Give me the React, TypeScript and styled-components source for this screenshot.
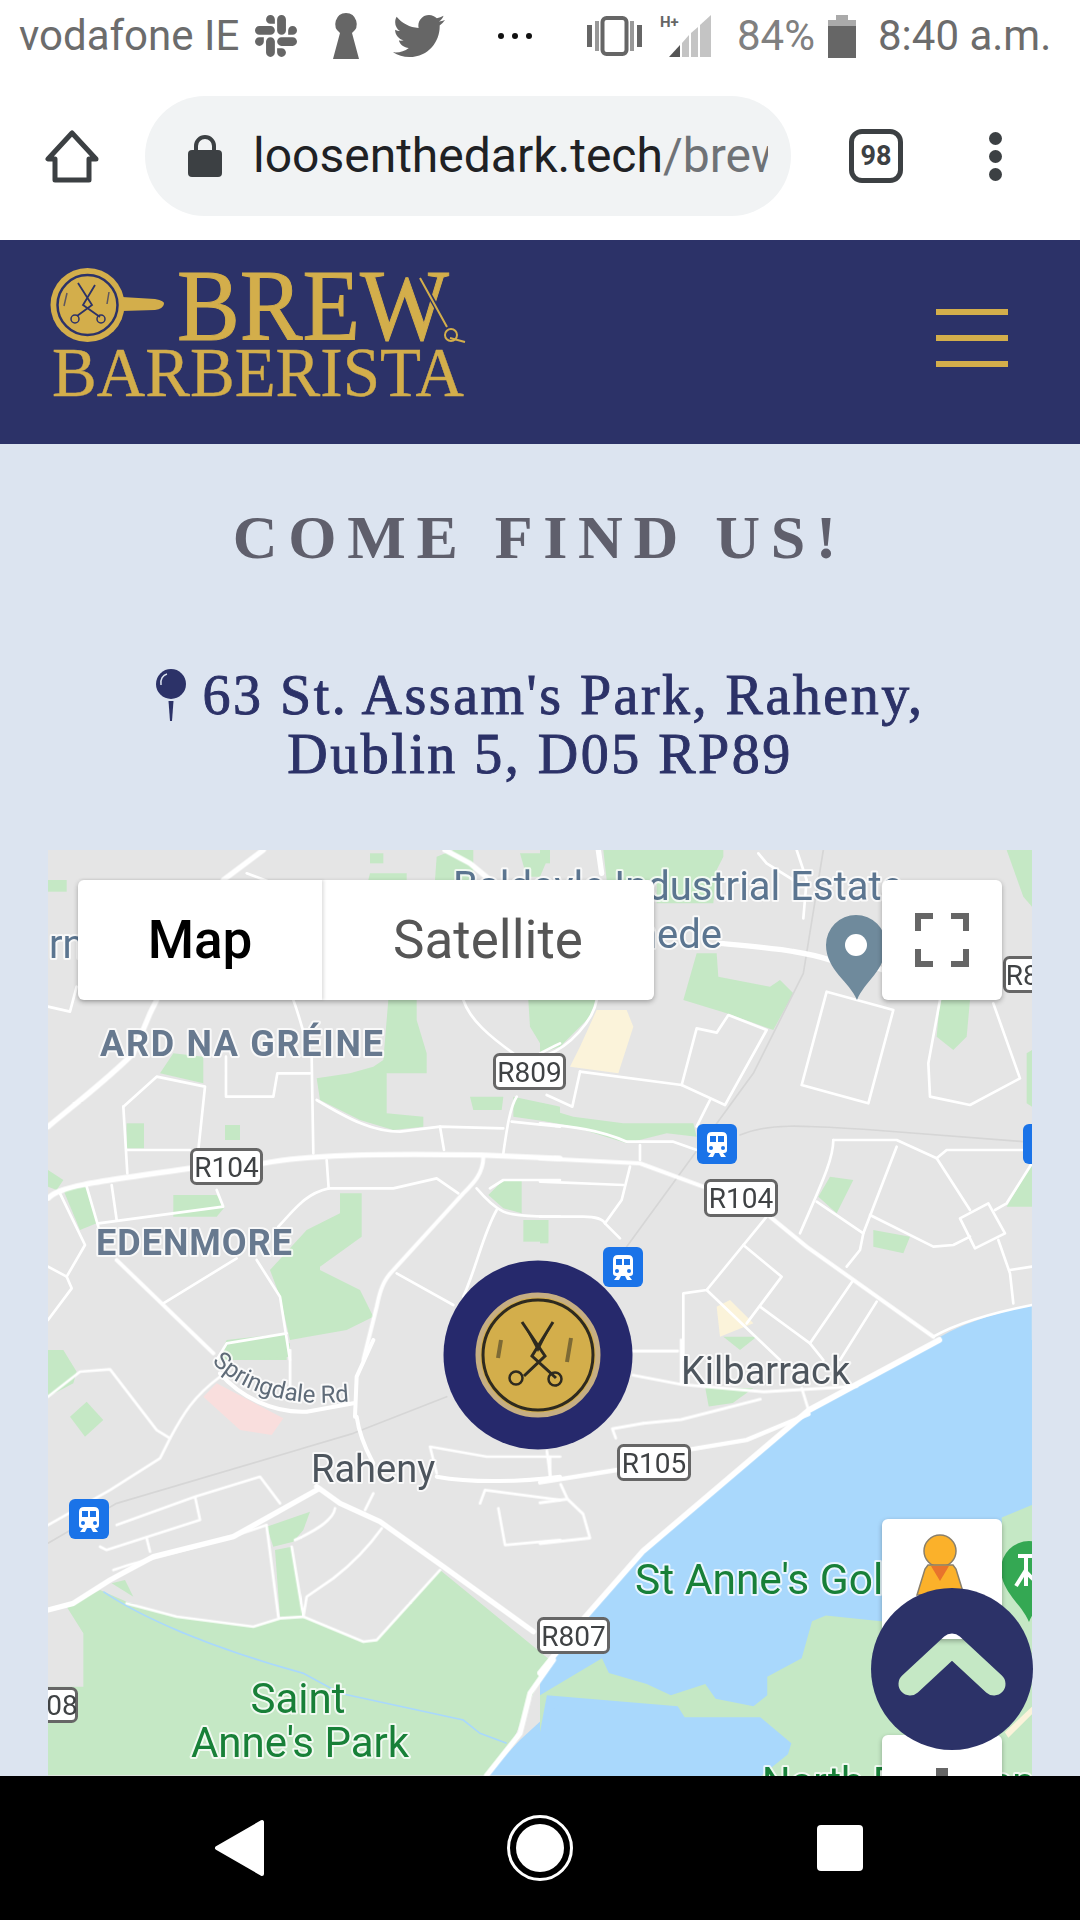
import React from "react";
import styled, { createGlobalStyle } from "styled-components";
import { FaSlack, FaTwitter } from "react-icons/fa";

const NAVY = "#2c3268";
const GOLD = "#d3ae4b";
const GREEN = "#c5e8c5";
const WATER = "#a9d8fc";

const Global = createGlobalStyle`
  html, body { margin: 0; padding: 0; background: #000; }
  * { box-sizing: border-box; }
`;

const Screen = styled.div`
  position: relative;
  width: 1080px;
  height: 1920px;
  overflow: hidden;
  display: flex;
  flex-direction: column;
  background: #fff;
  font-family: Roboto, "Liberation Sans", sans-serif;
`;

const StatusBar = styled.div`
  height: 72px;
  padding-left: 19px;
  display: flex;
  align-items: center;
  color: #6c6c6c;
`;

const StatusText = styled.span<{ $width: number; $left?: number; $color?: string }>`
  flex: none;
  width: ${(p) => p.$width}px;
  margin-left: ${(p) => p.$left ?? 0}px;
  font-size: 42px;
  line-height: 48px;
  white-space: nowrap;
  color: ${(p) => p.$color ?? "#6c6c6c"};
`;

const StatusIcon = styled.span<{ $left: number; $width: number; $height: number; $shift?: number }>`
  display: block;
  flex: none;
  margin-left: ${(p) => p.$left}px;
  width: ${(p) => p.$width}px;
  height: ${(p) => p.$height}px;
  transform: translateY(${(p) => p.$shift ?? 0}px);
  & > svg { display: block; width: 100%; height: 100%; }
`;

const Toolbar = styled.div`
  height: 168px;
  padding-left: 45px;
  display: flex;
  align-items: center;
`;

const HomeButton = styled.svg`
  width: 54px;
  height: 54px;
  flex: none;
`;

const AddressBar = styled.div`
  margin-left: 46px;
  width: 646px;
  height: 120px;
  flex: none;
  border-radius: 60px;
  background: #f1f3f4;
  display: flex;
  align-items: center;
  padding-left: 43px;
`;

const LockIcon = styled.svg`
  width: 34px;
  height: 42px;
  flex: none;
`;

const Url = styled.div`
  margin-left: 31px;
  width: 515px;
  overflow: hidden;
  white-space: nowrap;
  font-size: 48px;
  line-height: 56px;
  color: #202124;
  & > span { color: #6f7276; }
`;

const TabCount = styled.div`
  margin-left: 58px;
  width: 54px;
  height: 54px;
  flex: none;
  border: 5px solid #3c4043;
  border-radius: 13px;
  display: flex;
  align-items: center;
  justify-content: center;
  font-size: 27px;
  font-weight: 700;
  color: #3c4043;
`;

const MenuDots = styled.div`
  margin-left: 86px;
  display: flex;
  flex-direction: column;
  gap: 5px;
  & > i { display: block; width: 13px; height: 13px; border-radius: 50%; background: #3c4043; }
`;

const SiteHeader = styled.header`
  height: 204px;
  flex: none;
  background: ${NAVY};
  display: flex;
  align-items: center;
  justify-content: space-between;
  padding: 0 72px 0 48px;
`;

const LogoArt = styled.svg`
  width: 425px;
  height: 140px;
  flex: none;
  align-self: flex-start;
  margin-top: 22px;
`;

const Burger = styled.div`
  width: 72px;
  display: flex;
  flex-direction: column;
  gap: 20px;
  margin-bottom: 8px;
  & > i { display: block; height: 6px; background: ${GOLD}; }
`;

const Main = styled.main`
  height: 1332px;
  flex: none;
  background: #dce4f0;
  overflow: hidden;
  display: flex;
  flex-direction: column;
  align-items: center;
`;

const Title = styled.h1`
  margin: 58px 0 0;
  font-family: "Liberation Serif", serif;
  font-size: 62px;
  line-height: 70px;
  font-weight: 700;
  letter-spacing: 10.7px;
  color: #5f5f6c;
  white-space: nowrap;
`;

const Address = styled.h2`
  margin: 94px 0 0;
  font-family: "Liberation Serif", serif;
  font-size: 56px;
  line-height: 59px;
  font-weight: 400;
  letter-spacing: 2.5px;
  -webkit-text-stroke: 0.9px ${NAVY};
  color: ${NAVY};
  text-align: center;
`;

const PinGlyph = styled.svg`
  width: 32px;
  height: 52px;
  margin-right: 15px;
  vertical-align: -7px;
`;

const MapFrame = styled.div`
  position: relative;
  margin-top: 66px;
  width: 984px;
  height: 926px;
  flex: none;
  overflow: hidden;
  background: #e5e5e5;
`;

const MapArt = styled.svg`
  display: block;
  width: 984px;
  height: 926px;
`;

const SoftLayer = styled.g`
  filter: blur(0.7px);
`;

const MapText = styled.text<{ $size: number; $color: string; $weight?: number; $halo?: string; $track?: number }>`
  font-family: Roboto, sans-serif;
  font-size: ${(p) => p.$size}px;
  font-weight: ${(p) => p.$weight ?? 400};
  fill: ${(p) => p.$color};
  letter-spacing: ${(p) => p.$track ?? 0}px;
  paint-order: stroke;
  stroke: ${(p) => p.$halo ?? "rgba(255,255,255,.75)"};
  stroke-width: 4px;
  stroke-linejoin: round;
`;

const ShieldLabel = styled.text`
  font-family: Roboto, sans-serif;
  font-size: 28px;
  fill: #3f4244;
  text-anchor: middle;
`;

const MapTypeControl = styled.div`
  position: absolute;
  left: 30px;
  top: 30px;
  height: 120px;
  display: flex;
  border-radius: 6px;
  background: #fff;
  box-shadow: 0 2px 5px rgba(0, 0, 0, 0.3);
`;

const MapTypeButton = styled.div<{ $width: number; $active?: boolean }>`
  width: ${(p) => p.$width}px;
  display: flex;
  align-items: center;
  justify-content: center;
  font-size: 53px;
  font-weight: ${(p) => (p.$active ? 500 : 400)};
  color: ${(p) => (p.$active ? "#000" : "#565656")};
  box-shadow: ${(p) => (p.$active ? "2px 0 3px rgba(0,0,0,.12)" : "none")};
`;

const MapButton = styled.div<{ $top: number }>`
  position: absolute;
  left: 834px;
  top: ${(p) => p.$top}px;
  width: 120px;
  height: 120px;
  border-radius: 6px;
  background: #fff;
  box-shadow: 0 2px 5px rgba(0, 0, 0, 0.3);
  display: flex;
  align-items: center;
  justify-content: center;
`;

const ZoomStroke = styled.i`
  position: absolute;
  left: 54px;
  top: 33px;
  width: 12px;
  height: 40px;
  background: #666;
`;

const BottomNav = styled.nav`
  height: 144px;
  flex: none;
  background: #000;
  padding: 0 90px;
  display: grid;
  grid-template-columns: repeat(3, 300px);
  align-items: center;
  justify-items: center;
`;

const ScrollTop = styled.button`
  position: absolute;
  left: 871px;
  top: 1588px;
  width: 162px;
  height: 162px;
  padding: 0;
  border: 0;
  background: none;
  & > svg { display: block; }
`;

type Zone = {
  t: string;
  green: string[];
  yellow?: string[];
  pink?: string[];
  rail?: string[];
  thin: string[];
  mid?: string[];
  thick?: string[];
};

const ZONES: Zone[] = [
  {
    t: "translate(40 840) scale(.33333)",
    green: [
      "M24 120H80V155H24Z",
      "M1185 120L1190 50L1240 30H1300V120Z",
      "M985 120L990 100H1100V120Z",
      "M990 40H1030V70H990Z",
      "M1440 40H1530L1500 110H1460Z",
      "M1045 480H1130V540L1160 640V700H1040V820L1150 830V860L1060 870L960 840L840 780L830 715L930 700L1000 680L1030 660Z",
      "M1465 480H1560V620L1500 610L1470 560Z",
      "M360 700L400 640L490 650V730Z",
      "M260 850H312V925H260Z",
      "M555 855H600V900H555Z",
      "M400 1065H530L555 1100L530 1130H400Z",
      "M1290 770H1390L1385 810H1300Z",
      "M1420 770L1560 800V850L1420 830Z",
      "M1345 1065L1390 1020H1445V1120L1390 1105Z",
      "M1450 1140H1525V1205H1450Z",
      "M70 1050L140 1040L170 1150L120 1170Z",
      "M690 1290L800 1170L900 1120V1060H965V1190L840 1280V1290L960 1350L1000 1430L920 1470L750 1500L720 1370Z",
      "M560 1500L740 1480V1560H530Z",
      "M24 990L70 1020L50 1050L24 1040Z",
    ],
    thick: [
      "M24 860C120 780 200 720 280 640L330 520L350 480",
      "M550 120L670 30",
      "M1215 30L1290 70L1350 120",
      "M24 1075C60 1040 130 1030 450 985M670 970C800 945 1000 940 1320 945L1560 955",
    ],
    mid: [
      "M1330 950C1330 1000 1300 1030 1270 1060L1060 1290C1030 1320 1020 1350 1010 1400L970 1560",
      "M230 1260L520 1540",
    ],
    thin: [
      "M620 100L700 130",
      "M250 800L350 710L495 740L475 930",
      "M250 800L262 1000",
      "M262 930H450",
      "M558 650V770H700L712 700H810",
      "M815 650L820 940",
      "M760 480C775 520 785 560 795 590",
      "M830 780C930 840 1000 875 1080 875L1200 860L1390 865",
      "M1200 860L1212 930",
      "M1430 770C1410 800 1400 870 1390 940",
      "M1415 845L1560 860",
      "M860 960L866 1045",
      "M866 1045H1060L1190 1015L1255 1060",
      "M866 1045C800 1060 770 1100 715 1160",
      "M1310 1045C1340 1080 1370 1105 1390 1115C1420 1130 1500 1130 1560 1130",
      "M1350 1045L1390 1020H1560",
      "M1370 1110C1330 1180 1310 1280 1270 1370",
      "M1070 1300L1240 1395",
      "M140 1040L175 1160M215 1035L230 1140",
      "M60 1060L135 1215L80 1310L95 1345L24 1440",
      "M175 1150L550 1100L530 1050",
      "M370 1390L590 1255",
      "M650 1260L720 1370L750 1560",
      "M24 1280L80 1310",
      "M530 1560L560 1510L740 1480",
      "M24 500L90 515L110 440",
      "M1270 480C1290 540 1350 590 1420 640",
      "M1500 640L1560 610",
    ],
  },
  {
    t: "translate(540 840) scale(.33333)",
    green: [
      "M0 30H30V70H0Z",
      "M190 30H550V50L530 90L520 190H350V120H200Z",
      "M1400 30H1476V200L1450 170Z",
      "M430 480L470 340H530L535 410L690 440L720 420L760 460L700 570L560 520Z",
      "M0 480H170L150 530L60 620L0 640Z",
      "M1200 480H1290L1280 590L1240 630L1190 590Z",
      "M0 800L100 830L250 850H460L470 890L380 880L260 910L100 860L0 840Z",
      "M835 1070L870 1010L940 1020L890 1120Z",
      "M1000 1170L1110 1190L1090 1240L1000 1220Z",
      "M1400 1100L1476 970V1100Z",
      "M1460 640L1476 630V800L1460 790Z",
      "M550 1490H650L600 1530Z",
      "M0 1140H25V1210H0Z",
    ],
    yellow: ["M120 620L170 510H260L280 560L235 700L90 680Z", "M530 1400L570 1380L640 1450L540 1490Z"],
    rail: ["M850 30L790 400L640 700L260 1220", "M600 885C680 850 780 855 1000 870L1450 905"],
    thick: ["M175 30L185 100", "M540 310C650 320 780 330 870 360M1000 380L1030 390"],
    mid: ["M0 955C100 960 200 965 300 970L490 1040", "M690 1130L800 1220L1180 1490"],
    thin: [
      "M655 40L680 70L760 120",
      "M770 30L800 120L790 235",
      "M170 480C160 540 90 620 20 645",
      "M860 455L1060 510L985 790L785 735Z",
      "M1200 480L1165 670L1170 770L1290 795L1440 715L1360 490",
      "M470 565L530 578L565 525L680 570L555 795L425 735Z",
      "M120 695L425 735",
      "M120 695L97 800L20 765",
      "M510 780L470 860",
      "M0 850C100 860 180 870 260 905H400L470 930",
      "M300 915V960",
      "M270 980L245 1080L195 1150L240 1195",
      "M0 1025L250 1035",
      "M0 1130H130C170 1130 190 1140 195 1150",
      "M680 1130L500 1350L430 1360V1560",
      "M610 1215L725 1310L620 1450",
      "M500 1350L720 1560",
      "M660 1400L810 1510L850 1560",
      "M880 900H1070L1190 955L1290 1110",
      "M880 900C880 960 840 1040 780 1180",
      "M1070 920L970 1180L960 1230L920 1280",
      "M830 1085L970 1180",
      "M990 1125L1180 1220L1240 1215L1290 1190",
      "M1190 955L1220 930H1476",
      "M1260 1135L1345 1090L1395 1180L1305 1225Z",
      "M1375 1200L1410 1300L1420 1390",
      "M1410 1290L1476 1280",
      "M1365 1110L1400 1090L1476 970",
      "M940 1320L810 1510",
      "M1010 1385L900 1560",
      "M1476 1395C1350 1420 1250 1450 1180 1490",
    ],
  },
  {
    t: "translate(40 1340) scale(.33333)",
    green: [
      "M24 30H70L110 95L100 130L24 170Z",
      "M90 230L140 185L190 240L135 290Z",
      "M560 40L600 10H750V50L600 60Z",
      "M680 560L810 515L790 570L760 605L700 620Z",
      "M705 630L755 620L790 830H720Z",
      "M215 730L255 720L280 770Z",
      "M80 800L180 750L270 790L410 830L640 860L720 835L790 830L970 905L1010 900L1200 690L1530 960L1480 1060L1420 1200L1340 1306H24V1040H130V880Z",
    ],
    pink: ["M490 170L530 130L730 235L695 285L600 270Z"],
    rail: ["M24 610L230 490L940 280L1220 170"],
    thick: [
      "M24 810L100 790L210 720L340 650L580 590L830 450",
      "M830 440L900 490L1020 545L1210 680L1480 875",
      "M1540 960L1470 1060L1440 1180L1340 1306",
    ],
    mid: [
      "M950 230C960 300 990 350 1000 370",
      "M1000 0L950 110L945 230",
      "M540 100C600 170 700 220 800 215L940 190",
      "M1190 410C1300 430 1450 425 1560 410",
    ],
    thin: [
      "M24 170L120 95L210 88L350 270L390 295L360 355L210 450L24 555",
      "M390 295C430 220 460 170 540 110",
      "M180 620L200 630L480 540L465 470M230 555L465 470L660 410L720 490",
      "M320 595L330 635",
      "M220 690C300 660 500 620 680 555",
      "M260 790L410 830L640 860L720 835L790 830L970 905L1010 900L1200 690",
      "M680 560L715 830",
      "M755 620L790 830L800 770L880 715C950 660 1000 600 1025 565",
      "M765 600C830 570 880 540 885 505",
      "M1000 460L975 510",
      "M1190 400L1170 320L1340 350H1560",
      "M1530 350V405",
      "M1320 490L1335 450L1560 480",
      "M1375 505L1395 615L1560 600",
      "M750 30V150",
    ],
  },
  {
    t: "translate(540 1340) scale(.34435 .36996)",
    green: [
      "M480 130H620L560 170L490 180Z",
      "M0 960L180 860L200 900L310 930L380 960L480 930L510 970L620 990L660 960V910L760 860L790 760L830 745L990 760L1341 720V480L1430 445V1180H640L720 1120L730 1090L640 1020H420L400 990L20 960L0 1060Z",
    ],
    yellow: ["M1350 1060L1430 990V1010L1360 1075Z"],
    thick: ["M1160 0L780 190L300 570L130 750L0 900"],
    mid: ["M0 385L230 350M440 295L600 270L780 200"],
    thin: [
      "M270 95L410 120L650 140L920 125",
      "M270 30H400",
      "M410 0V120",
      "M760 130L780 190",
      "M300 225L210 240L220 265",
      "M300 225L410 215L640 160",
      "M20 300L30 370",
      "M60 390L80 430L0 440",
      "M80 430L125 470L145 535L0 550",
    ],
  },
];

const WATER_PATHS = [
  { t: "translate(540 1340) scale(.34435 .36996)", d: "M1160 0L780 190L300 570L130 750L0 900V1180H1430V0Z" },
  { t: "translate(540 840) scale(.33333)", d: "M1100 1560C1200 1470 1350 1420 1476 1395V1560Z" },
  { t: "translate(40 1340) scale(.33333)", d: "M1340 1306L1440 1200L1560 1090V1306Z" },
  { t: "translate(40 1340) scale(.33333)", d: "M1340 1170L1385 1145L1415 1190L1350 1190Z" },
];

const Zones = ({ pick }: { pick: (z: Zone) => React.ReactNode }) => (
  <>
    {ZONES.map((z) => (
      <g key={z.t} transform={z.t}>
        {pick(z)}
      </g>
    ))}
  </>
);

const Lines = ({ list, width, color = "#fff" }: { list?: string[]; width: number; color?: string }) => (
  <>
    {(list ?? []).map((d) => (
      <path key={d} d={d} fill="none" stroke={color} strokeWidth={width} strokeLinejoin="round" strokeLinecap="round" />
    ))}
  </>
);

const Fills = ({ list, color }: { list?: string[]; color: string }) => (
  <>
    {(list ?? []).map((d) => (
      <path key={d} d={d} fill={color} />
    ))}
  </>
);

const Shield = ({ x, y, w, h, label, anchor }: { x: number; y: number; w: number; h: number; label: string; anchor?: number }) => (
  <g>
    <rect x={x + 1.5} y={y + 1.5} width={w - 3} height={h - 3} rx={5} fill="#fff" stroke="#666" strokeWidth={3} />
    <ShieldLabel x={anchor ?? x + w / 2} y={y + h / 2 + 10}>
      {label}
    </ShieldLabel>
  </g>
);

const Transit = ({ x, y }: { x: number; y: number }) => (
  <g transform={`translate(${x} ${y})`}>
    <rect width={40} height={40} rx={6} fill="#1a73e8" />
    <path d="M15 8H25Q30 8 30 13V26Q30 29 27 29H13Q10 29 10 26V13Q10 8 15 8Z" fill="#fff" />
    <path d="M14 29L11 33H16L18 29ZM26 29L29 33H24L22 29Z" fill="#fff" />
    <rect x={13} y={12} width={6} height={6} fill="#1a73e8" />
    <rect x={21} y={12} width={6} height={6} fill="#1a73e8" />
    <circle cx={14} cy={24} r={2} fill="#1a73e8" />
    <circle cx={26} cy={24} r={2} fill="#1a73e8" />
  </g>
);

const MapPicture = () => (
  <MapArt viewBox="48 850 984 926">
    <defs>
      <path id="springdale" d="M212 1362C240 1392 290 1410 362 1400" />
    </defs>
    <rect x={48} y={850} width={984} height={926} fill="#e5e5e5" />
    <SoftLayer>
      {WATER_PATHS.map((w) => (
        <path key={w.d} transform={w.t} d={w.d} fill={WATER} />
      ))}
      <Zones pick={(z) => <Fills list={z.green} color={GREEN} />} />
      <Zones pick={(z) => <Fills list={z.yellow} color="#fbf3da" />} />
      <Zones pick={(z) => <Fills list={z.pink} color="#f9dedd" />} />
      <path
        transform="translate(40 1340) scale(.33333)"
        d="M190 755C300 830 500 920 790 1000L900 1060L1270 1140L1320 1180L1400 1210"
        fill="none"
        stroke={WATER}
        strokeWidth={5}
      />
      <Zones pick={(z) => <Lines list={z.rail} width={5} color="#d6d6d6" />} />
      <Zones pick={(z) => <Lines list={z.thin} width={8} />} />
      <Zones pick={(z) => <Lines list={z.mid} width={12} />} />
      <Zones pick={(z) => <Lines list={z.thick} width={16} />} />
    </SoftLayer>

    <MapText x={453} y={900} $size={40} $color="#5b7590">Baldoyle Industrial Estate</MapText>
    <MapText x={722} y={948} $size={40} $color="#5b7590" textAnchor="end">Donaghmede</MapText>
    <MapText x={49} y={958} $size={40} $color="#5b7590">rn</MapText>
    <MapText x={100} y={1056} $size={36} $weight={700} $track={1.7} $color="#67798f">ARD NA GRÉINE</MapText>
    <MapText x={96} y={1255} $size={36} $weight={700} $track={1} $color="#67798f">EDENMORE</MapText>
    <MapText x={681} y={1384} $size={38} $color="#4d555d">Kilbarrack</MapText>
    <MapText x={311} y={1482} $size={38} $color="#4d555d">Raheny</MapText>
    <MapText $size={24} $color="#5f6b78">
      <textPath href="#springdale">Springdale Rd</textPath>
    </MapText>
    <MapText x={298} y={1713} $size={42} $color="#188038" textAnchor="middle">Saint</MapText>
    <MapText x={300} y={1757} $size={42} $color="#188038" textAnchor="middle">Anne's Park</MapText>
    <MapText x={635} y={1594} $size={42.5} $color="#188038">St Anne's Golf Club</MapText>
    <MapText x={762} y={1796} $size={40} $color="#188038">North Bull Island</MapText>

    <Shield x={493} y={1053} w={73} h={37} label="R809" />
    <Shield x={190} y={1148} w={73} h={37} label="R104" />
    <Shield x={704} y={1179} w={74} h={38} label="R104" />
    <Shield x={617} y={1444} w={74} h={37} label="R105" />
    <Shield x={537} y={1617} w={73} h={37} label="R807" />
    <Shield x={30} y={1687} w={48} h={36} label="08" anchor={62} />
    <Shield x={1003} y={956} w={70} h={37} label="R807" />

    <Transit x={697} y={1124} />
    <Transit x={603} y={1247} />
    <Transit x={69} y={1499} />
    <Transit x={1023} y={1124} />

    <path d="M857 1000C850 982 826 970 826 945A30 30 0 0 1 886 945C886 970 864 982 857 1000Z" fill="#6f8a9c" />
    <circle cx={856} cy={945} r={11} fill="#fff" />

    <path d="M1029 1622C1022 1604 1001 1592 1001 1569A28 28 0 0 1 1057 1569C1057 1592 1036 1604 1029 1622Z" fill="#34a853" />
    <path d="M1018 1556H1034M1026 1556V1586M1026 1570L1016 1586M1026 1572L1036 1582" stroke="#fff" strokeWidth={4} fill="none" />

    <circle cx={538} cy={1355} r={94.5} fill="#26296c" />
    <circle cx={538} cy={1355} r={60} fill={GOLD} stroke="#c6ae82" strokeWidth={5} />
    <circle cx={538} cy={1355} r={55} fill={GOLD} stroke="#2e2a1f" strokeWidth={3} />
    <path d="M522 1322L545 1356L524 1376M553 1322L532 1356L556 1378" fill="none" stroke="#2e2a1f" strokeWidth={3} />
    <path d="M522 1322L538 1345L553 1322L538 1352Z" fill="#2e2a1f" />
    <circle cx={516} cy={1378} r={6.5} fill="none" stroke="#2e2a1f" strokeWidth={2.5} />
    <circle cx={555} cy={1379} r={6.5} fill="none" stroke="#2e2a1f" strokeWidth={2.5} />
    <path d="M501 1340L498 1358M571 1338L567 1362" fill="none" stroke="#7d6a35" strokeWidth={4} />
  </MapArt>
);

const Logo = () => (
  <LogoArt viewBox="48 262 425 140">
    <circle cx={87.5} cy={305} r={37} fill={GOLD} />
    <circle cx={87.5} cy={305} r={30} fill="none" stroke={NAVY} strokeWidth={2.5} />
    <path d="M122 297L155 299Q165 301 164 304Q163 309 155 310L122 311Z" fill={GOLD} />
    <path d="M78 283L92 305L77 316M95 285L83 305L100 317" fill="none" stroke={NAVY} strokeWidth={1.8} />
    <circle cx={75} cy={319} r={4} fill="none" stroke={NAVY} strokeWidth={1.5} />
    <circle cx={101} cy={319} r={4} fill="none" stroke={NAVY} strokeWidth={1.5} />
    <path d="M67 293L64 306M109 292L107 304" fill="none" stroke={NAVY} strokeWidth={1.5} opacity={0.7} />
    <text x={177} y={340} fontFamily="Liberation Serif, serif" fontSize={101} fill={GOLD} stroke={GOLD} strokeWidth={1} textLength={272} lengthAdjust="spacingAndGlyphs">
      BREW
    </text>
    <text x={52} y={396} fontFamily="Liberation Serif, serif" fontSize={69} fill={GOLD} stroke={GOLD} strokeWidth={0.4} textLength={412} lengthAdjust="spacingAndGlyphs">
      BARBERISTA
    </text>
    <path d="M420 278L448 328" stroke={NAVY} strokeWidth={5} />
    <path d="M420 278L447 327M450 338L465 342" stroke={GOLD} strokeWidth={2} fill="none" />
    <circle cx={451} cy={335} r={6} fill="none" stroke={GOLD} strokeWidth={2} />
  </LogoArt>
);

const Pegman = () => (
  <svg width="60" height="120" viewBox="0 0 60 120">
    <circle cx={28} cy={32} r={16} fill="#fbb12a" stroke="#8a7f6a" strokeWidth={1.5} />
    <path d="M16 46H41L44 50L52 76H5L13 50Z" fill="#fbb12a" stroke="#8a7f6a" strokeWidth={1.5} />
    <path d="M19 47H37L28 62Z" fill="#e8742c" />
  </svg>
);

export default function App() {
  return (
    <>
      <Global />
      <Screen>
        <StatusBar>
          <StatusText $width={220}>vodafone IE</StatusText>
          <StatusIcon $left={13} $width={48} $height={48}><FaSlack color="#666" /></StatusIcon>
          <StatusIcon $left={33} $width={26} $height={46}>
            <svg viewBox="0 0 26 46"><path d="M13 0A11 11 0 0 1 19 20L26 46H0L7 20A11 11 0 0 1 13 0Z" fill="#666" /></svg>
          </StatusIcon>
          <StatusIcon $left={34} $width={52} $height={52}><FaTwitter color="#666" /></StatusIcon>
          <StatusIcon $left={51} $width={39} $height={8}>
            <svg viewBox="0 0 39 8"><circle cx={5} cy={4} r={3} fill="#111" /><circle cx={19} cy={4} r={3} fill="#111" /><circle cx={33} cy={4} r={3} fill="#111" /></svg>
          </StatusIcon>
          <StatusIcon $left={52} $width={55} $height={40}>
            <svg viewBox="0 0 55 40">
              <rect x={15.5} y={2} width={24} height={36} rx={4} fill="none" stroke="#666" strokeWidth={4} />
              <rect x={0} y={9} width={5} height={22} fill="#666" />
              <rect x={8} y={5} width={4} height={30} fill="#999" />
              <rect x={43} y={5} width={4} height={30} fill="#999" />
              <rect x={50} y={9} width={5} height={22} fill="#666" />
            </svg>
          </StatusIcon>
          <StatusIcon $left={18} $width={51} $height={44}>
            <svg viewBox="0 0 51 44">
              <text x={0} y={13} fontFamily="Roboto, sans-serif" fontSize={15} fontWeight={700} fill="#666">H+</text>
              <path d="M9 43H20V31Z" fill="#555" />
              <path d="M22 43H29V21L22 29Z" fill="#c4c4c4" />
              <path d="M31 43H38V13L31 19Z" fill="#c4c4c4" />
              <path d="M40 43H51V1L40 11Z" fill="#c4c4c4" />
            </svg>
          </StatusIcon>
          <StatusText $left={26} $width={78} $color="#808080">84%</StatusText>
          <StatusIcon $left={13} $width={28} $height={43}>
            <svg viewBox="0 0 28 43">
              <rect x={8} y={0} width={12} height={6} fill="#aaa" />
              <rect x={0} y={5} width={28} height={6} fill="#aaa" />
              <rect x={0} y={11} width={28} height={32} fill="#666" />
            </svg>
          </StatusIcon>
          <StatusText $left={22} $width={174}>8:40 a.m.</StatusText>
        </StatusBar>

        <Toolbar>
          <HomeButton viewBox="0 0 54 54">
            <path d="M27 4L3 30H10V51H44V30H51Z" fill="none" stroke="#3c4043" strokeWidth={5} strokeLinejoin="round" />
          </HomeButton>
          <AddressBar>
            <LockIcon viewBox="0 0 34 42">
              <rect x={0} y={15} width={34} height={27} rx={4} fill="#3c4043" />
              <path d="M8 17V11A9 9 0 0 1 26 11V17" fill="none" stroke="#3c4043" strokeWidth={4} />
            </LockIcon>
            <Url>loosenthedark.tech<span>/brew-barberista</span></Url>
          </AddressBar>
          <TabCount>98</TabCount>
          <MenuDots><i /><i /><i /></MenuDots>
        </Toolbar>

        <SiteHeader>
          <Logo />
          <Burger><i /><i /><i /></Burger>
        </SiteHeader>

        <Main>
          <Title>COME FIND US!</Title>
          <Address>
            <PinGlyph viewBox="0 0 32 52">
              <circle cx={16} cy={15} r={15} fill={NAVY} />
              <path d="M6 16C5 10 8 6 12 5" fill="none" stroke="#dce4f0" strokeWidth={1.5} />
              <path d="M13.5 32H18.5L17 52H15Z" fill={NAVY} />
            </PinGlyph>
            63 St. Assam's Park, Raheny,
            <br />
            Dublin 5, D05 RP89
          </Address>
          <MapFrame>
            <MapPicture />
            <MapTypeControl>
              <MapTypeButton $width={244} $active>Map</MapTypeButton>
              <MapTypeButton $width={332}>Satellite</MapTypeButton>
            </MapTypeControl>
            <MapButton $top={30}>
              <svg width="54" height="54" viewBox="0 0 54 54">
                <path d="M3 18V3H18M36 3H51V18M51 36V51H36M18 51H3V36" fill="none" stroke="#666" strokeWidth={6} />
              </svg>
            </MapButton>
            <MapButton $top={669}><Pegman /></MapButton>
            <MapButton $top={885}><ZoomStroke /></MapButton>
          </MapFrame>
        </Main>

        <BottomNav>
          <svg width="52" height="58" viewBox="0 0 52 58">
            <path d="M48 3V55L3 29Z" fill="#fff" stroke="#fff" strokeWidth={4} strokeLinejoin="round" />
          </svg>
          <svg width="66" height="66" viewBox="0 0 66 66">
            <circle cx={33} cy={33} r={31.5} fill="none" stroke="#fff" strokeWidth={3} />
            <circle cx={33} cy={33} r={24} fill="#fff" />
          </svg>
          <svg width="46" height="46" viewBox="0 0 46 46">
            <rect width={46} height={46} rx={4} fill="#fff" />
          </svg>
        </BottomNav>

        <ScrollTop aria-label="Back to top">
          <svg width="162" height="162" viewBox="0 0 162 162">
            <mask id="chevron-hole">
              <rect width={162} height={162} fill="#fff" />
              <path d="M39 96L81 57L123 96" fill="none" stroke="#000" strokeWidth={23} strokeLinecap="round" strokeLinejoin="round" />
            </mask>
            <circle cx={81} cy={81} r={81} fill={NAVY} mask="url(#chevron-hole)" />
          </svg>
        </ScrollTop>
      </Screen>
    </>
  );
}
